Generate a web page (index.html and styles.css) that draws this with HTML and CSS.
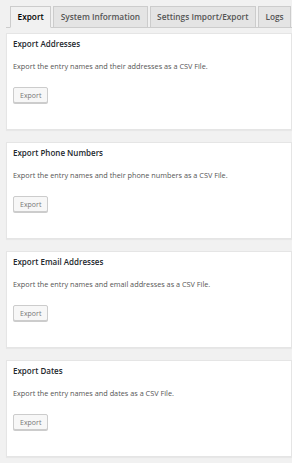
FILE: index.html
```html
<!DOCTYPE html>
<html lang="en">
<head>
    <meta charset="UTF-8">
    <meta name="viewport" content="width=device-width, initial-scale=1.0">
    <title>Tools - Export</title>
    <link rel="stylesheet" href="styles.css">
</head>
<body>
    <div class="wrap">
        <nav class="nav-tabs">
            <a class="nav-tab nav-tab-active" href="#">Export</a>
            <a class="nav-tab" href="#">System Information</a>
            <a class="nav-tab" href="#">Settings Import/Export</a>
            <a class="nav-tab" href="#">Logs</a>
        </nav>

        <div class="postbox">
            <h3 class="hndle">Export Addresses</h3>
            <p>Export the entry names and their addresses as a CSV File.</p>
            <button class="button">Export</button>
        </div>

        <div class="postbox">
            <h3 class="hndle">Export Phone Numbers</h3>
            <p>Export the entry names and their phone numbers as a CSV File.</p>
            <button class="button">Export</button>
        </div>

        <div class="postbox">
            <h3 class="hndle">Export Email Addresses</h3>
            <p>Export the entry names and email addresses as a CSV File.</p>
            <button class="button">Export</button>
        </div>

        <div class="postbox">
            <h3 class="hndle">Export Dates</h3>
            <p>Export the entry names and dates as a CSV File.</p>
            <button class="button">Export</button>
        </div>
    </div>
</body>
</html>
```

FILE: styles.css
```css
* {
    margin: 0;
    padding: 0;
    box-sizing: border-box;
}

body {
    font-family: "Open Sans", "Noto Sans", sans-serif;
    background: #f1f1f1;
    color: #444;
}

.wrap {
    padding: 6px 0 0 6px;
}

.nav-tabs {
    display: flex;
    gap: 2px;
    padding-left: 4px;
    border-bottom: 1px solid #ccc;
}

.nav-tab {
    display: block;
    flex-shrink: 0;
    white-space: nowrap;
    height: 22px;
    margin-bottom: -1px;
    padding: 0 6.5px;
    line-height: 20px;
    font-size: 8.3px;
    font-weight: 600;
    color: #555;
    text-decoration: none;
    background: #e4e4e4;
    border: 1px solid #ccc;
}

.nav-tab-active {
    color: #000;
    background: #f1f1f1;
    border-bottom-color: #f1f1f1;
}

.postbox {
    height: 97px;
    margin-top: 5px;
    margin-bottom: 12px;
    padding: 5px 6px 0;
    background: #fff;
    border: 1px solid #e5e5e5;
    box-shadow: 0 1px 1px rgba(0, 0, 0, 0.04);
}

.hndle {
    font-size: 8px;
    font-weight: 600;
    color: #23282d;
    line-height: 10px;
}

.postbox p {
    margin-top: 12px;
    font-size: 7.3px;
    line-height: 10px;
    color: #555;
}

.button {
    display: block;
    margin-top: 16px;
    height: 16px;
    padding: 0 6px;
    font-family: inherit;
    font-size: 7px;
    color: #777;
    background: #f7f7f7;
    border: 1px solid #ccc;
    border-radius: 2px;
    box-shadow: 0 1px 0 #ccc;
}
```
